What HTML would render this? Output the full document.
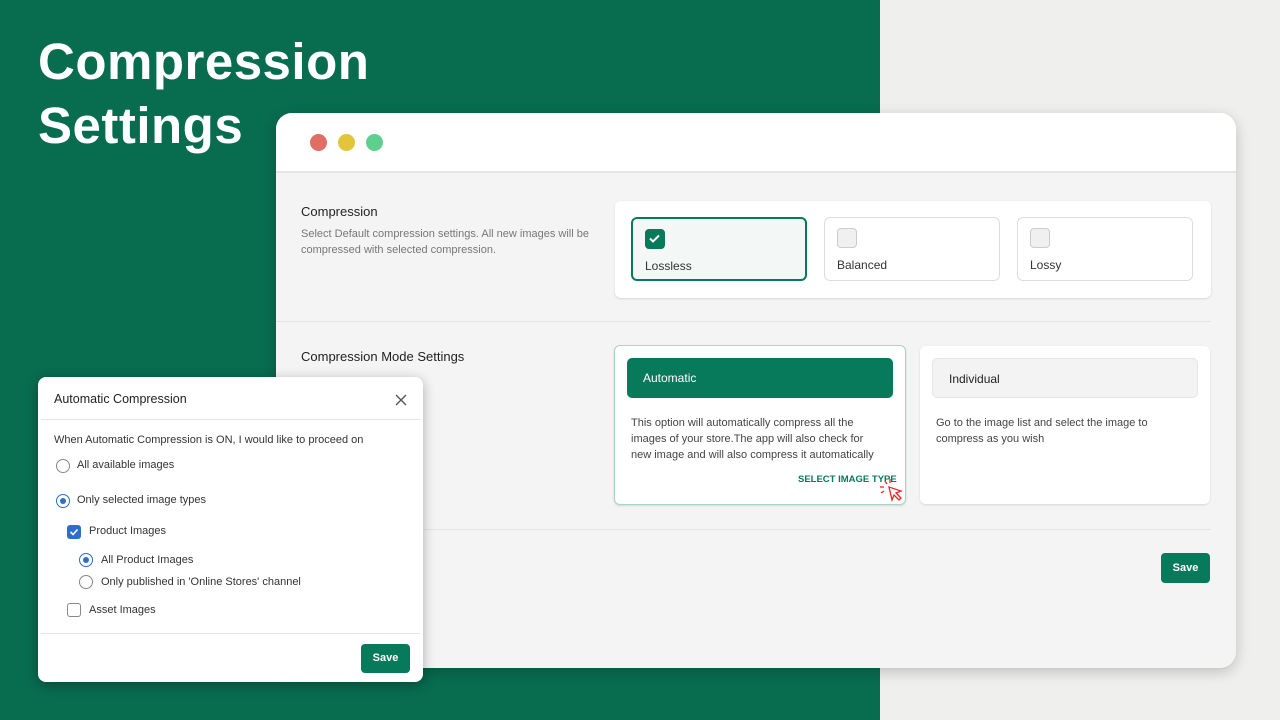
<!DOCTYPE html>
<html><head><style>
*{box-sizing:border-box;margin:0;padding:0}
body{width:1280px;height:720px;position:relative;overflow:hidden;font-family:"Liberation Sans",sans-serif;background:#efefed}
.green{position:absolute;left:0;top:0;width:880px;height:720px;background:#086c4f}
h1{position:absolute;left:38px;top:30px;color:#fff;font-size:51px;font-weight:bold;line-height:64px;letter-spacing:0.5px}
.win{position:absolute;left:276px;top:113px;width:960px;height:555px;background:#f4f4f4;border-radius:16px;overflow:hidden;box-shadow:0 4px 14px rgba(0,0,0,.2)}
.head{height:60px;background:#fff;border-bottom:2px solid #e4e4e4}
.dot{position:absolute;top:21px;width:17px;height:17px;border-radius:50%}
.t{position:absolute;font-size:13px;color:#222}
.s{position:absolute;font-size:11px;color:#777;line-height:16px}
.card{position:absolute;background:#fff;border-radius:6px;box-shadow:0 1px 2px rgba(0,0,0,.12)}
.opt{position:absolute;top:16px;width:176px;height:64px;border:1.5px solid #ddd;border-radius:6px;background:#fff}
.opt .cb{position:absolute;left:12px;top:10px;width:20px;height:20px;border-radius:4px;border:1.5px solid #ccc;background:#f0f0f0}
.opt span{position:absolute;left:12px;top:40px;font-size:12px;color:#333}
.p{position:absolute;font-size:11px;color:#444;line-height:16px}
.modal{position:absolute;left:38px;top:377px;width:385px;height:305px;background:#fff;border-radius:8px;box-shadow:0 3px 12px rgba(0,0,0,.3)}
.m{position:absolute;font-size:11px;color:#333}
.rad{position:absolute;width:14px;height:14px;border-radius:50%;border:1.5px solid #888;background:#fff}
.rad.on{border:1.5px solid #2c6ecb}
.rad.on::after{content:"";position:absolute;left:2.5px;top:2.5px;width:6px;height:6px;border-radius:50%;background:#2c6ecb}
.btn{position:absolute;background:#077a5b;color:#fff;font-weight:bold;font-size:11px;border-radius:4px;text-align:center}
</style></head><body>
<div class="green"></div>
<h1>Compression<br>Settings</h1>
<div class="win">
 <div class="head"></div>
 <div class="dot" style="left:34px;background:#df6e65"></div>
 <div class="dot" style="left:62px;background:#e3c53c"></div>
 <div class="dot" style="left:90px;background:#5fcf8d"></div>
 <div class="t" style="left:25px;top:91px">Compression</div>
 <div class="s" style="left:25px;top:113px;width:310px">Select Default compression settings. All new images will be compressed with selected compression.</div>
 <div class="card" style="left:339px;top:88px;width:596px;height:97px">
  <div class="opt" style="left:16px;border:2px solid #077a5b;background:#f3f7f5"><div class="cb" style="background:#077a5b;border-color:#077a5b"><svg width="17" height="17" viewBox="0 0 17 17"><path d="M4 8.5l3 3 6-6" stroke="#fff" stroke-width="2" fill="none"/></svg></div><span>Lossless</span></div>
  <div class="opt" style="left:209px"><div class="cb"></div><span>Balanced</span></div>
  <div class="opt" style="left:402px"><div class="cb"></div><span>Lossy</span></div>
 </div>
 <div style="position:absolute;left:0;right:25px;top:208px;height:1px;background:#e4e4e4"></div>
 <div class="t" style="left:25px;top:236px">Compression Mode Settings</div>
 <div class="card" style="left:338px;top:232px;width:292px;height:160px;border:1.5px solid #a8d5c3">
  <div style="position:absolute;left:12px;top:12px;width:266px;height:40px;background:#077a5b;border-radius:5px;color:#fff;font-size:12px;padding:13px 16px">Automatic</div>
  <div class="p" style="left:16px;top:69px;width:252px">This option will automatically compress all the images of your store.The app will also check for new image and will also compress it automatically</div>
  <div style="position:absolute;left:183px;top:128px;font-size:9.5px;font-weight:bold;color:#077a5b">SELECT IMAGE TYPE</div>
  <svg style="position:absolute;left:264px;top:132px" width="30" height="28" viewBox="0 0 30 28"><path d="M10 9l3 13 2-5 5 5 2-2-5-5 5-2z" fill="#fff" stroke="#e22" stroke-width="1.3"/><path d="M6 3l2 3M1 9h4M2 15l3-2M11 1v4" stroke="#e22" stroke-width="1.3"/></svg>
 </div>
 <div class="card" style="left:644px;top:233px;width:290px;height:158px">
  <div style="position:absolute;left:12px;top:12px;width:266px;height:40px;background:#f3f3f3;border:1px solid #e6e6e6;border-radius:5px;color:#222;font-size:12px;padding:13px 16px">Individual</div>
  <div class="p" style="left:16px;top:69px;width:260px">Go to the image list and select the image to compress as you wish</div>
 </div>
 <div style="position:absolute;left:0;right:25px;top:416px;height:1px;background:#e4e4e4"></div>
 <div class="btn" style="left:885px;top:440px;width:49px;height:30px;line-height:30px">Save</div>
</div>
<div class="modal">
 <div class="m" style="left:16px;top:15px;font-size:12.5px;color:#222">Automatic Compression</div>
 <svg style="position:absolute;left:356px;top:16px" width="14" height="14" viewBox="0 0 14 14"><path d="M2 2l10 10M12 2L2 12" stroke="#555" stroke-width="1.4"/></svg>
 <div style="position:absolute;left:3px;right:3px;top:42px;height:1px;background:#e4e4e4"></div>
 <div class="m" style="left:16px;top:57px">When Automatic Compression is ON, I would like to proceed on</div>
 <div class="rad" style="left:18px;top:82px"></div><div class="m" style="left:39px;top:82px">All available images</div>
 <div class="rad on" style="left:18px;top:117px"></div><div class="m" style="left:39px;top:117px">Only selected image types</div>
 <div style="position:absolute;left:29px;top:148px;width:14px;height:14px;background:#2c6ecb;border-radius:3px"><svg width="14" height="14"><path d="M3.5 7l2.5 2.5 4.5-5" stroke="#fff" stroke-width="1.6" fill="none"/></svg></div>
 <div class="m" style="left:51px;top:148px">Product Images</div>
 <div class="rad on" style="left:41px;top:176px"></div><div class="m" style="left:63px;top:177px">All Product Images</div>
 <div class="rad" style="left:41px;top:198px"></div><div class="m" style="left:63px;top:199px">Only published in 'Online Stores' channel</div>
 <div style="position:absolute;left:29px;top:226px;width:14px;height:14px;border:1.5px solid #888;border-radius:3px"></div>
 <div class="m" style="left:51px;top:227px">Asset Images</div>
 <div style="position:absolute;left:3px;right:3px;top:256px;height:1px;background:#e4e4e4"></div>
 <div class="btn" style="left:323px;top:267px;width:49px;height:29px;line-height:29px">Save</div>
</div>
</body></html>
